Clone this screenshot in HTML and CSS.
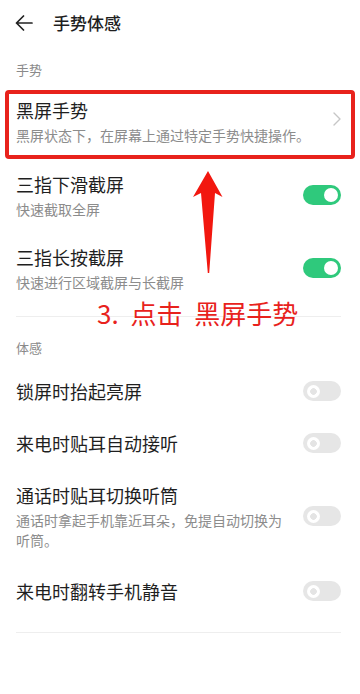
FILE: index.html
```html
<!DOCTYPE html>
<html lang="zh-CN">
<head>
<meta charset="utf-8">
<title>手势体感</title>
<link rel="stylesheet" href="styles.css">
</head>
<body>
<div class="page">
  <header class="topbar">
    <svg class="back" width="18" height="16" viewBox="0 0 18 16"><path d="M17 8H1.5M8.5 1L1.5 8l7 7" fill="none" stroke="#222" stroke-width="1.7" stroke-linecap="round" stroke-linejoin="round"/></svg>
    <h1 class="title-main">手势体感</h1>
  </header>

  <section class="group group-gesture">
    <div class="group-label">手势</div>
    <div class="item item-highlight">
      <div class="text">
        <div class="title">黑屏手势</div>
        <div class="sub">黑屏状态下，在屏幕上通过特定手势快捷操作。</div>
      </div>
      <svg class="chevron" width="8" height="14" viewBox="0 0 8 14"><path d="M1 1l6 6-6 6" fill="none" stroke="#c6c6c6" stroke-width="1.4" stroke-linecap="round" stroke-linejoin="round"/></svg>
    </div>
    <div class="item">
      <div class="text">
        <div class="title">三指下滑截屏</div>
        <div class="sub">快速截取全屏</div>
      </div>
      <span class="toggle on"></span>
    </div>
    <div class="item">
      <div class="text">
        <div class="title">三指长按截屏</div>
        <div class="sub">快速进行区域截屏与长截屏</div>
      </div>
      <span class="toggle on"></span>
    </div>
  </section>
  <div class="divider"></div>

  <section class="group group-sense">
    <div class="group-label">体感</div>
    <div class="item item-single item-first">
      <div class="text"><div class="title">锁屏时抬起亮屏</div></div>
      <span class="toggle"></span>
    </div>
    <div class="item item-single">
      <div class="text"><div class="title">来电时贴耳自动接听</div></div>
      <span class="toggle"></span>
    </div>
    <div class="item item-call">
      <div class="text">
        <div class="title">通话时贴耳切换听筒</div>
        <div class="sub">通话时拿起手机靠近耳朵，免提自动切换为听筒。</div>
      </div>
      <span class="toggle"></span>
    </div>
    <div class="item item-single">
      <div class="text"><div class="title">来电时翻转手机静音</div></div>
      <span class="toggle"></span>
    </div>
  </section>
  <div class="divider divider-bottom"></div>

  <div class="annotation">3. 点击 黑屏手势</div>
  <svg class="arrow" width="40" height="110" viewBox="0 0 40 110"><path d="M17 1 L31.5 27 L24 23 L18.2 103 L16.8 103 L10 23 L2 27 Z" fill="#f2170f"/></svg>
</div>
</body>
</html>
```
FILE: styles.css
```css
* { box-sizing: border-box; }
html, body { margin: 0; padding: 0; background: #fff; }
body {
  font-family: "Noto Sans CJK SC", "Noto Sans", sans-serif;
  color: #1f1f1f;
}
.page {
  position: relative;
  width: 360px;
  height: 694px;
  padding: 0 19px 0 16px;
  overflow: hidden;
}
.topbar {
  height: 46px;
  display: flex;
  align-items: center;
  margin-left: -1px;
}
.back { display: block; }
.title-main {
  margin: 0 0 0 20px;
  font-size: 17px;
  font-weight: 500;
  line-height: 24px;
  color: #1f1f1f;
}
.group-label {
  font-size: 13px;
  line-height: 16px;
  color: #8a8a8a;
}
.group-gesture .group-label { margin-top: 16px; }
.group-sense .group-label { margin-top: 23px; }
.item {
  display: flex;
  align-items: center;
  padding: 12px 0 12.5px;
}
.text { flex: 1; min-width: 0; }
.title {
  font-size: 18px;
  line-height: 26px;
  color: #1f1f1f;
}
.sub {
  margin-top: 2px;
  font-size: 14px;
  line-height: 20px;
  color: #8c8c8c;
}
.item-highlight {
  margin: 12px -14px 0 -11px;
  padding: 3px 10px 10px 7px;
  border: 4px solid #e8221c;
  border-radius: 4px;
}
.chevron { display: block; margin-top: -4px; }
.item-single { padding: 13px 0; }
.item-first { margin-top: 9px; }
.item-call { padding: 13px 0 15px; }
.toggle {
  position: relative;
  flex: none;
  width: 38px;
  height: 20px;
  border-radius: 10px;
  background: #e6e6e6;
  margin-left: 12px;
}
.toggle::after {
  content: "";
  position: absolute;
  top: 3.5px;
  left: 3.5px;
  width: 13px;
  height: 13px;
  border-radius: 50%;
  background: radial-gradient(circle, #e4e4e4 0, #e4e4e4 3px, #fff 3.6px);
}
.toggle.on { background: #2fc97c; }
.toggle.on::after {
  left: auto;
  right: 3px;
  top: 3px;
  width: 14px;
  height: 14px;
  background: #fff;
}
.divider {
  height: 1px;
  background: #eeeeee;
  margin-top: 12px;
}
.divider-bottom { margin-top: 15px; }
.annotation {
  position: absolute;
  left: 97px;
  top: 297px;
  font-size: 26px;
  line-height: 32px;
  color: #e8221c;
  word-spacing: 6px;
  white-space: nowrap;
}
.arrow {
  position: absolute;
  left: 191px;
  top: 170px;
}
```
